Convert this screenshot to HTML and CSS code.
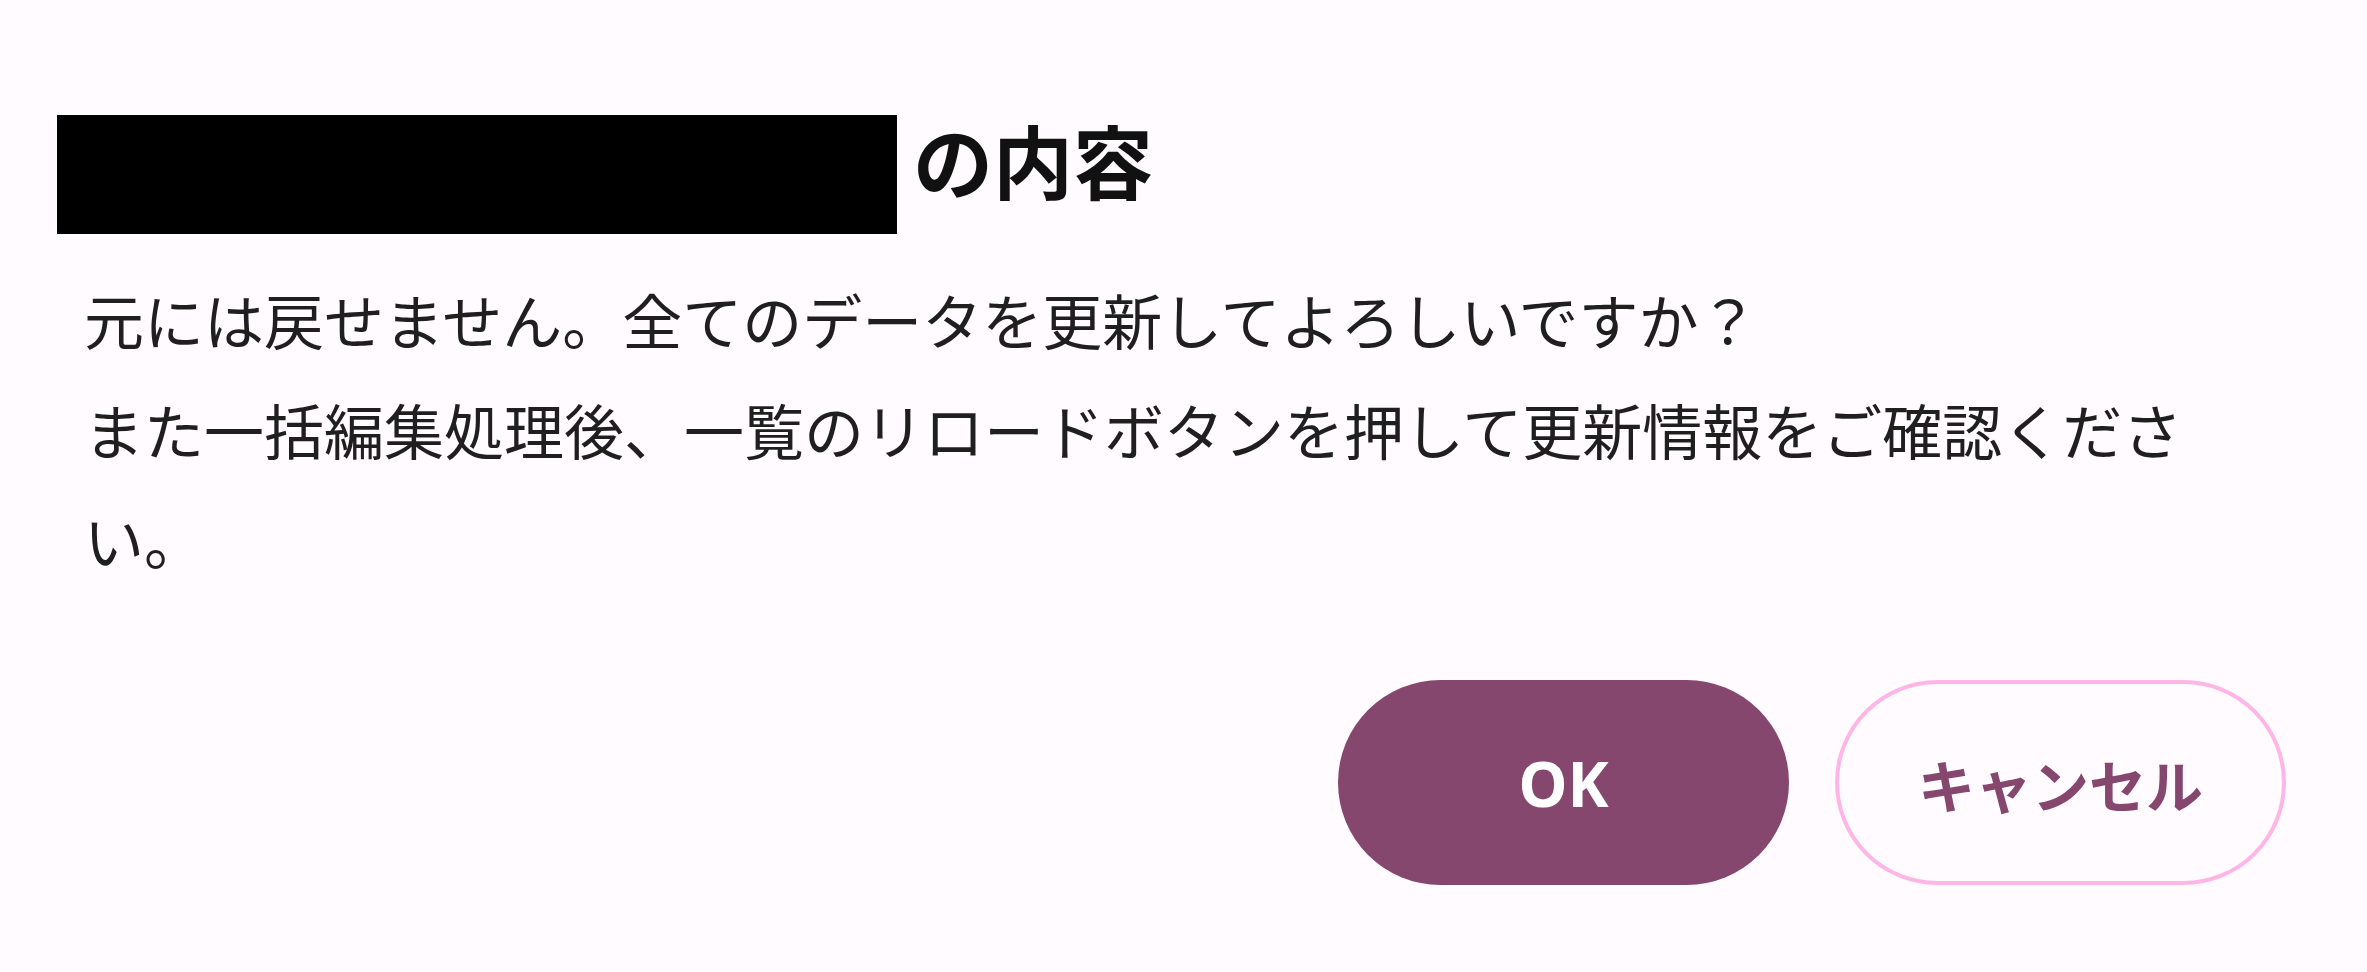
FILE: index.html
```html
<!DOCTYPE html>
<html lang="ja">
<head>
<meta charset="utf-8">
<title>確認</title>
<link rel="stylesheet" href="styles.css">
</head>
<body>
<div class="dialog">
  <div class="title-row">
    <span class="redacted"></span>
    <h1 class="title">の内容</h1>
  </div>
  <p class="message">元には戻せません。全てのデータを更新してよろしいですか？<br>また一括編集処理後、一覧のリロードボタンを押して更新情報をご確認ください。</p>
  <div class="actions">
    <button class="btn btn-primary">OK</button>
    <button class="btn btn-secondary">キャンセル</button>
  </div>
</div>
</body>
</html>
```
FILE: styles.css
```css
html, body {
  margin: 0;
  padding: 0;
  background: #fffbfe;
}

body {
  width: 2367px;
  height: 972px;
  overflow: hidden;
  font-family: "Noto Sans CJK JP", "Noto Sans", sans-serif;
  color: #1c1b1f;
}

.dialog {
  display: flex;
  flex-direction: column;
  padding: 115px 81px 0 57px;
}

.title-row {
  display: flex;
  align-items: flex-start;
  gap: 16px;
}

.redacted {
  display: block;
  width: 840px;
  height: 119px;
  background: #000;
  flex: none;
}

.title {
  margin: 3px 0 0 0;
  font-size: 80px;
  line-height: 80px;
  font-weight: 700;
  color: #111;
}

.message {
  margin: 30px 0 0 27px;
  font-size: 60px;
  line-height: 110px;
  font-weight: 400;
  color: #1f1f1f;
}

.actions {
  display: flex;
  justify-content: flex-end;
  gap: 46px;
  margin-top: 86px;
}

.btn {
  width: 451px;
  height: 205px;
  border-radius: 103px;
  font-weight: 700;
  cursor: pointer;
  display: flex;
  align-items: center;
  justify-content: center;
  padding: 0;
}

.btn-primary {
  background: #86476f;
  border: none;
  color: #ffffff;
  font-family: "Noto Sans", "Liberation Sans", sans-serif;
  font-size: 62px;
}

.btn-secondary {
  background: #fffbfe;
  border: 4px solid #ffb6e6;
  color: #86476f;
  font-family: "Noto Sans CJK JP", sans-serif;
  font-size: 57px;
}
```
